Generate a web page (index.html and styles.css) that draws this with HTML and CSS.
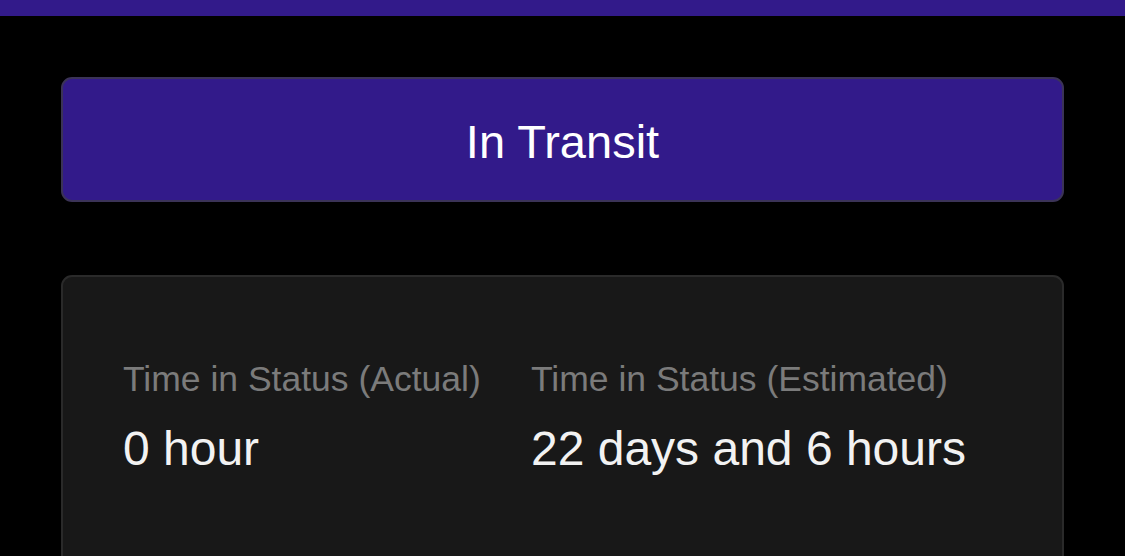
FILE: index.html
```html
<!DOCTYPE html>
<html>
<head>
<meta charset="utf-8">
<link rel="stylesheet" href="styles.css">
</head>
<body>
<div class="topbar"></div>
<main class="content">
  <div class="status-btn">In Transit</div>
  <section class="card">
    <div class="stats">
      <div class="stat">
        <div class="label">Time in Status (Actual)</div>
        <div class="value">0 hour</div>
      </div>
      <div class="stat">
        <div class="label">Time in Status (Estimated)</div>
        <div class="value">22 days and 6 hours</div>
      </div>
    </div>
  </section>
</main>
</body>
</html>
```

FILE: styles.css
```css
html, body {
  margin: 0;
  padding: 0;
  background: #000;
  font-family: "Liberation Sans", Arial, sans-serif;
  overflow: hidden;
  height: 556px;
}
.topbar {
  height: 16px;
  background: #321a8a;
}
.content {
  padding: 61px 61px 0 61px;
  display: flex;
  flex-direction: column;
  gap: 73px;
}
.status-btn {
  box-sizing: border-box;
  height: 125px;
  padding-top: 4px;
  background: #321a8a;
  border: 2px solid #3b3357;
  border-radius: 11px;
  color: #fff;
  font-size: 47px;
  display: flex;
  align-items: center;
  justify-content: center;
}
.card {
  background: #181818;
  border: 2px solid #2a2a2a;
  border-radius: 11px;
  padding: 82px 60px 0 60px;
  height: 300px;
}
.stats {
  display: grid;
  grid-template-columns: 408px 1fr;
}
.label {
  color: #7b7b7b;
  font-size: 35.5px;
  line-height: 40px;
}
.value {
  margin-top: 22px;
  color: #f2f2f2;
  font-size: 48px;
  line-height: 55px;
}
```
